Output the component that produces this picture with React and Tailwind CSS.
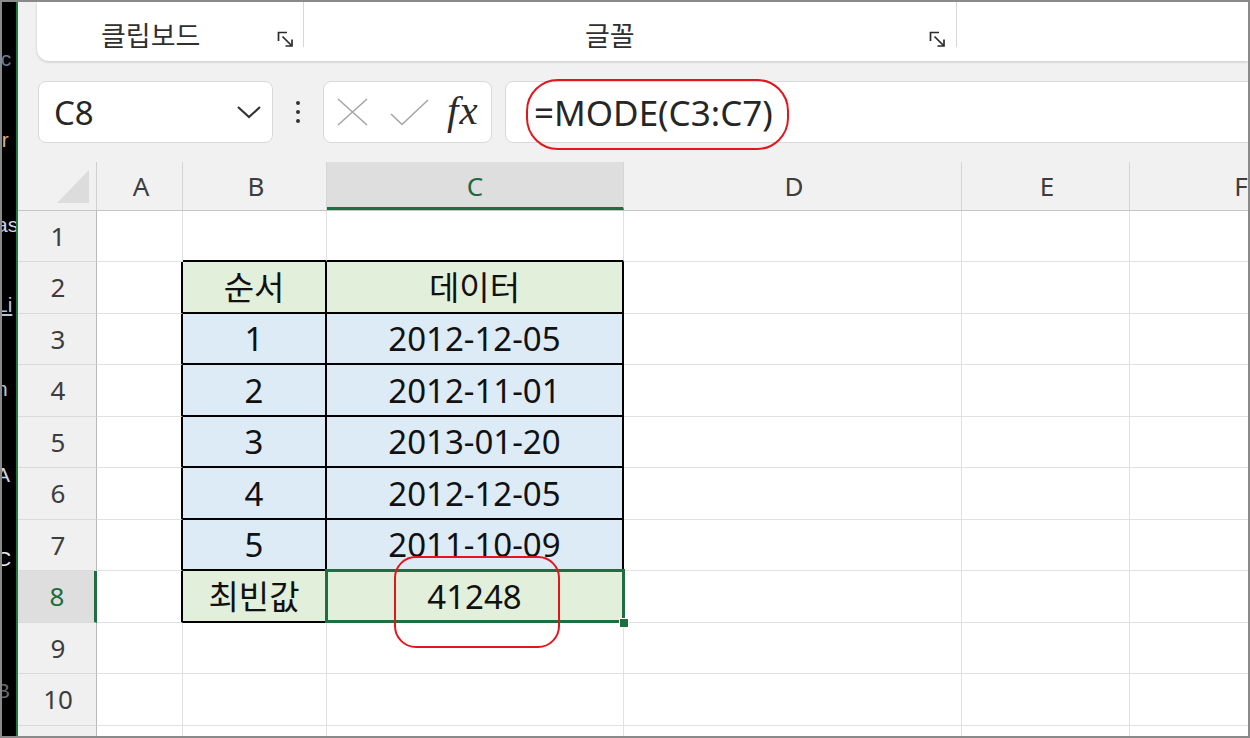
import React from 'react';

const uiFont = { fontFamily: '"Noto Sans", "Noto Sans CJK KR", sans-serif' };

const cols = [
  { label: 'A', w: 'w-[86px]' },
  { label: 'B', w: 'w-[144px]' },
  { label: 'C', w: 'w-[297px]' },
  { label: 'D', w: 'w-[338px]' },
  { label: 'E', w: 'w-[168px]' },
  { label: 'F', w: 'w-[220px]' },
];

const rowHeights = ['h-[51px]', 'h-[52px]', 'h-[51px]', 'h-[52px]', 'h-[51px]', 'h-[52px]', 'h-[51px]', 'h-[52px]', 'h-[51px]', 'h-[52px]', 'h-[51px]'];

// B2:C8
const table = {
  2: ['순서', '데이터'],
  3: ['1', '2012-12-05'],
  4: ['2', '2012-11-01'],
  5: ['3', '2013-01-20'],
  6: ['4', '2012-12-05'],
  7: ['5', '2011-10-09'],
  8: ['최빈값', '41248'],
};

function Launcher() {
  return (
    <svg width="17" height="17" viewBox="0 0 17 17" fill="none" stroke="#2b2b2b" strokeWidth="1.7">
      <path d="M1.5 10 V1.5 H10" />
      <path d="M5.5 5.5 L14.5 14.5" />
      <path d="M15 8.5 V15 H8.5" />
    </svg>
  );
}

function Ribbon() {
  return (
    <div className="flex h-[59px] shrink-0">
      <div className="w-[19px] shrink-0" />
      <div className="flex-1 flex bg-white rounded-bl-[12px] shadow-[0_1px_3px_rgba(0,0,0,0.18)]">
        <div className="w-[267px] shrink-0 flex items-end border-r border-[#d6d6d6] mb-[14px]">
          <span className="ml-[64px] text-[27px] leading-none text-[#2f2f2f] translate-y-[1px]" style={{ fontFamily: '"Noto Sans CJK KR", sans-serif' }}>클립보드</span>
          <span className="ml-auto mr-[9px] mb-[-1px]"><Launcher /></span>
        </div>
        <div className="w-[653px] shrink-0 flex items-end border-r border-[#d6d6d6] mb-[14px]">
          <span className="ml-[281px] text-[27px] leading-none text-[#2f2f2f] translate-y-[1px]" style={{ fontFamily: '"Noto Sans CJK KR", sans-serif' }}>글꼴</span>
          <span className="ml-auto mr-[10px] mb-[-1px]"><Launcher /></span>
        </div>
      </div>
    </div>
  );
}

function FormulaBar() {
  return (
    <div className="flex items-center h-[62px] mt-[20px] pl-[20px] shrink-0" style={uiFont}>
      <div className="w-[235px] h-[62px] shrink-0 bg-white border border-[#d9d9d9] rounded-[8px] flex items-center pl-[15px] pr-[10px]">
        <span className="text-[33px] leading-none text-[#262626]">C8</span>
        <svg className="ml-auto" width="26" height="16" viewBox="0 0 26 16" fill="none" stroke="#333" strokeWidth="2.2">
          <polyline points="2,3 13,13 24,3" />
        </svg>
      </div>
      <div className="w-[50px] shrink-0 flex flex-col items-center gap-[5px]">
        <span className="w-[4px] h-[4px] rounded-full bg-[#333]" />
        <span className="w-[4px] h-[4px] rounded-full bg-[#333]" />
        <span className="w-[4px] h-[4px] rounded-full bg-[#333]" />
      </div>
      <div className="w-[169px] h-[62px] shrink-0 bg-white border border-[#d9d9d9] rounded-[8px] flex items-center pl-[13px]">
        <svg width="31" height="28" viewBox="0 0 31 28" fill="none" stroke="#a6a6a6" strokeWidth="1.6">
          <path d="M1 1 L30 27 M30 1 L1 27" />
        </svg>
        <svg className="ml-[22px]" width="39" height="27" viewBox="0 0 39 27" fill="none" stroke="#a6a6a6" strokeWidth="1.6">
          <polyline points="1,15 12,25.5 38,1" />
        </svg>
        <span className="ml-[18px] text-[41px] leading-none italic text-[#2a2a2a] tracking-[1px] -translate-y-[2px]" style={{ fontFamily: '"Liberation Serif", serif' }}>fx</span>
      </div>
      <div className="flex-1 ml-[13px] mr-[-14px] h-[62px] bg-white border border-[#d9d9d9] rounded-[8px] flex items-center pl-[28px]">
        <span className="text-[35px] leading-none text-[#262626]">=MODE(C3:C7)</span>
      </div>
    </div>
  );
}

function HeaderRow() {
  return (
    <div className="flex h-[49px] mt-[19px] shrink-0 border-b border-[#c4c4c4]" style={uiFont}>
      <div className="w-[79px] shrink-0 relative border-r border-[#d0d0d0]">
        <svg className="absolute left-[39px] top-[8px]" width="32" height="33" viewBox="0 0 32 33">
          <polygon points="32,0 32,33 0,33" fill="#dcdcdc" />
        </svg>
      </div>
      {cols.map(c => {
        const sel = c.label === 'C';
        return (
          <div
            key={c.label}
            className={`${c.w} shrink-0 flex items-center justify-center border-r border-[#d6d6d6] text-[26px] ${sel ? 'bg-[#dedede] text-[#1b6b3e] border-b-[3px] border-b-[#1d6f42] pt-[3px]' : 'text-[#3d3d3d] pl-[3px]'}`}
          >
            {c.label}
          </div>
        );
      })}
    </div>
  );
}

function Cell({ row, col, w }) {
  const inTable = row >= 2 && row <= 8 && (col === 1 || col === 2);
  const aboveTable = row === 1 && (col === 1 || col === 2);
  const leftOfTable = row >= 2 && row <= 8 && col === 0;
  const value = inTable ? table[row][col - 1] : null;

  let cls = 'border-r border-b border-[#e1e1e1] bg-white';
  if (inTable) {
    const bg = row === 2 || row === 8 ? 'bg-[#e2efda]' : 'bg-[#ddebf7]';
    cls = `border-r-2 border-b-2 border-black ${bg}`;
  } else if (aboveTable) {
    cls = 'border-r border-r-[#e1e1e1] border-b-2 border-b-black bg-white';
  } else if (leftOfTable) {
    cls = 'border-b border-b-[#e1e1e1] border-r-2 border-r-black bg-white';
  }
  const selected = row === 8 && col === 2;

  return (
    <div className={`${w} shrink-0 flex items-center justify-center ${cls} ${selected ? 'relative' : ''}`}>
      {value && (
        <span className="text-[33px] leading-none text-[#111]" style={{ fontFamily: '"Noto Sans", "Noto Sans CJK KR", sans-serif' }}>{value}</span>
      )}
      {selected && (
        <>
          <div className="absolute -left-[2px] -top-[2px] -right-[3px] -bottom-[2px] border-[3px] border-[#1d6f42]" />
          <div className="absolute -right-[7px] -bottom-[7px] w-[10px] h-[10px] bg-[#1d6f42] border border-white" />
        </>
      )}
    </div>
  );
}

function Grid() {
  return (
    <div className="flex flex-col" style={uiFont}>
      {rowHeights.map((h, i) => {
        const row = i + 1;
        const sel = row === 8;
        return (
          <div key={row} className={`flex ${h} shrink-0`}>
            <div
              className={`w-[79px] shrink-0 flex items-center justify-center pl-[2px] border-b border-[#dadada] text-[26px] ${sel ? 'bg-[#dedede] text-[#1b6b3e] border-r-[3px] border-r-[#1d6f42]' : 'bg-[#f0f0f0] text-[#3d3d3d] border-r border-r-[#b9b9b9]'}`}
            >
              {row <= 10 ? row : ''}
            </div>
            {cols.map((c, ci) => (
              <Cell key={c.label} row={row} col={ci} w={c.w} />
            ))}
          </div>
        );
      })}
    </div>
  );
}

function BackWindowStrip() {
  const bits = [
    { t: 'ic', top: 'top-[46px]', color: 'text-[#6c7a96]' },
    { t: 'Ir', top: 'top-[127px]', color: 'text-[#d9b08a]' },
    { t: 'as', top: 'top-[212px]', color: 'text-[#c9d2e6]' },
    { t: 'Li', top: 'top-[292px]', color: 'text-[#b7c3dd] underline' },
    { t: 'n', top: 'top-[376px]', color: 'text-[#c2c2c2]' },
    { t: 'A', top: 'top-[462px]', color: 'text-[#cfd6e6]' },
    { t: 'C', top: 'top-[546px]', color: 'text-[#e6ebf7]' },
    { t: 'B', top: 'top-[678px]', color: 'text-[#6b6b6b]' },
  ];
  return (
    <div className="w-[14px] shrink-0 relative overflow-hidden bg-black">
      {bits.map(b => (
        <span
          key={b.t}
          className={`absolute -left-[6px] ${b.top} ${b.color} text-[21px] leading-none`}
          style={{ fontFamily: '"Liberation Sans", sans-serif' }}
        >
          {b.t}
        </span>
      ))}
    </div>
  );
}

export default function App() {
  return (
    <div className="relative w-[1250px] h-[738px] overflow-hidden border-2 border-[#8a8a8a] flex bg-black">
      <BackWindowStrip />
      <div className="w-[2px] shrink-0 bg-[#1e7a3c]" />
      <div className="flex-1 flex flex-col bg-[#f1f1f1] overflow-hidden">
        <Ribbon />
        <FormulaBar />
        <HeaderRow />
        <Grid />
      </div>
      {/* red annotation marks */}
      <div className="absolute left-[524px] top-[77px] w-[263px] h-[71px] rounded-[32px] border-2 border-[#e3151d]" />
      <div className="absolute left-[392px] top-[554px] w-[166px] h-[92px] rounded-[22px] border-2 border-[#e3151d]" />
    </div>
  );
}
